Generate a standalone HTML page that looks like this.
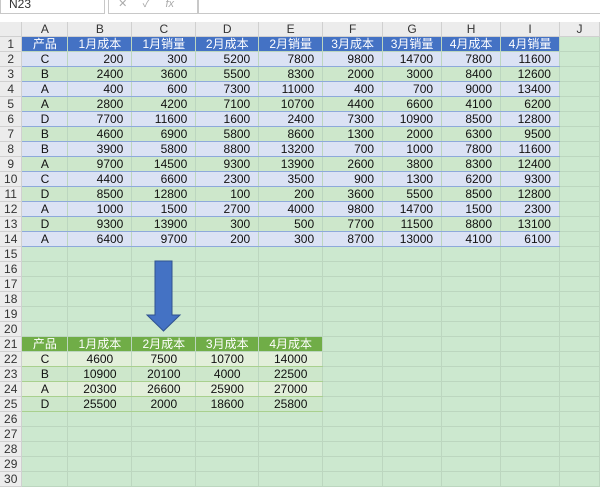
<!DOCTYPE html><html><head><meta charset="utf-8"><style>
body{margin:0;width:600px;height:475px;overflow:hidden;background:#cce8cf;font-family:"Liberation Sans","Noto Sans CJK SC",sans-serif;position:relative}
.top{position:absolute;left:0;top:0;width:600px;height:22px;background:#fff;border-bottom:1px solid #d4d4d4}
.nb{position:absolute;left:0;top:-6px;width:95px;height:18px;border:1px solid #c8c8c8;font-size:12px;color:#333;padding-left:8px;line-height:18px}
.fx{position:absolute;left:108px;top:-6px;width:88px;height:18px;border:1px solid #c8c8c8;color:#aaa;font-size:11px}
.fb{position:absolute;left:198px;top:-6px;width:402px;height:18px;border:1px solid #c8c8c8}
table{position:absolute;left:0;top:22px;border-collapse:collapse;table-layout:fixed}
td{height:14px;padding:0;border-right:1px solid #bcd6bf;border-bottom:1px solid #bcd6bf;font-size:12px;text-align:right;padding-right:8px;line-height:14px;white-space:nowrap;overflow:hidden;color:#111}
td.h,tr.ch td{background:#ececec;color:#333;text-align:center;padding:0;border-color:#d0d0d0}
tr.ch td{height:13px;text-align:center}
td.c{text-align:center;padding:0}
tr.b1 td.t{background:#4472c4;color:#fff;text-align:center;padding:0}
tr.l td.t{background:#dbe2f4;border-bottom:1px solid #8ea9db}
tr.g td.t{background:#cde7cb;border-bottom:1px solid #8ea9db}
tr.gh td.s{background:#70ad47;color:#fff;text-align:center;padding:0}
tr.gl td.s{background:#e2efda;text-align:center;padding:0;border-bottom:1px solid #a9d08e}
tr.gd td.s{background:#cde7cb;text-align:center;padding:0;border-bottom:1px solid #a9d08e}
</style></head><body>
<div class="top"><div class="nb">N23</div><div class="fx">&nbsp;&nbsp;&nbsp;✕&nbsp;&nbsp;&nbsp;&nbsp;&nbsp;✓&nbsp;&nbsp;&nbsp;&nbsp;&nbsp;<i>fx</i></div><div class="fb"></div></div>
<table>
<colgroup><col style="width:22px"><col style="width:46px"><col style="width:64px"><col style="width:64px"><col style="width:63px"><col style="width:64px"><col style="width:60px"><col style="width:59px"><col style="width:59px"><col style="width:59px"><col style="width:40px"></colgroup>
<tr class="ch"><td></td><td>A</td><td>B</td><td>C</td><td>D</td><td>E</td><td>F</td><td>G</td><td>H</td><td>I</td><td>J</td></tr>
<tr class="b1"><td class="h">1</td><td class="t">产品</td><td class="t">1月成本</td><td class="t">1月销量</td><td class="t">2月成本</td><td class="t">2月销量</td><td class="t">3月成本</td><td class="t">3月销量</td><td class="t">4月成本</td><td class="t">4月销量</td><td></td></tr>
<tr class="l"><td class="h">2</td><td class="t c">C</td><td class="t">200</td><td class="t">300</td><td class="t">5200</td><td class="t">7800</td><td class="t">9800</td><td class="t">14700</td><td class="t">7800</td><td class="t">11600</td><td></td></tr>
<tr class="g"><td class="h">3</td><td class="t c">B</td><td class="t">2400</td><td class="t">3600</td><td class="t">5500</td><td class="t">8300</td><td class="t">2000</td><td class="t">3000</td><td class="t">8400</td><td class="t">12600</td><td></td></tr>
<tr class="l"><td class="h">4</td><td class="t c">A</td><td class="t">400</td><td class="t">600</td><td class="t">7300</td><td class="t">11000</td><td class="t">400</td><td class="t">700</td><td class="t">9000</td><td class="t">13400</td><td></td></tr>
<tr class="g"><td class="h">5</td><td class="t c">A</td><td class="t">2800</td><td class="t">4200</td><td class="t">7100</td><td class="t">10700</td><td class="t">4400</td><td class="t">6600</td><td class="t">4100</td><td class="t">6200</td><td></td></tr>
<tr class="l"><td class="h">6</td><td class="t c">D</td><td class="t">7700</td><td class="t">11600</td><td class="t">1600</td><td class="t">2400</td><td class="t">7300</td><td class="t">10900</td><td class="t">8500</td><td class="t">12800</td><td></td></tr>
<tr class="g"><td class="h">7</td><td class="t c">B</td><td class="t">4600</td><td class="t">6900</td><td class="t">5800</td><td class="t">8600</td><td class="t">1300</td><td class="t">2000</td><td class="t">6300</td><td class="t">9500</td><td></td></tr>
<tr class="l"><td class="h">8</td><td class="t c">B</td><td class="t">3900</td><td class="t">5800</td><td class="t">8800</td><td class="t">13200</td><td class="t">700</td><td class="t">1000</td><td class="t">7800</td><td class="t">11600</td><td></td></tr>
<tr class="g"><td class="h">9</td><td class="t c">A</td><td class="t">9700</td><td class="t">14500</td><td class="t">9300</td><td class="t">13900</td><td class="t">2600</td><td class="t">3800</td><td class="t">8300</td><td class="t">12400</td><td></td></tr>
<tr class="l"><td class="h">10</td><td class="t c">C</td><td class="t">4400</td><td class="t">6600</td><td class="t">2300</td><td class="t">3500</td><td class="t">900</td><td class="t">1300</td><td class="t">6200</td><td class="t">9300</td><td></td></tr>
<tr class="g"><td class="h">11</td><td class="t c">D</td><td class="t">8500</td><td class="t">12800</td><td class="t">100</td><td class="t">200</td><td class="t">3600</td><td class="t">5500</td><td class="t">8500</td><td class="t">12800</td><td></td></tr>
<tr class="l"><td class="h">12</td><td class="t c">A</td><td class="t">1000</td><td class="t">1500</td><td class="t">2700</td><td class="t">4000</td><td class="t">9800</td><td class="t">14700</td><td class="t">1500</td><td class="t">2300</td><td></td></tr>
<tr class="g"><td class="h">13</td><td class="t c">D</td><td class="t">9300</td><td class="t">13900</td><td class="t">300</td><td class="t">500</td><td class="t">7700</td><td class="t">11500</td><td class="t">8800</td><td class="t">13100</td><td></td></tr>
<tr class="l"><td class="h">14</td><td class="t c">A</td><td class="t">6400</td><td class="t">9700</td><td class="t">200</td><td class="t">300</td><td class="t">8700</td><td class="t">13000</td><td class="t">4100</td><td class="t">6100</td><td></td></tr>
<tr><td class="h">15</td><td></td><td></td><td></td><td></td><td></td><td></td><td></td><td></td><td></td><td></td></tr>
<tr><td class="h">16</td><td></td><td></td><td></td><td></td><td></td><td></td><td></td><td></td><td></td><td></td></tr>
<tr><td class="h">17</td><td></td><td></td><td></td><td></td><td></td><td></td><td></td><td></td><td></td><td></td></tr>
<tr><td class="h">18</td><td></td><td></td><td></td><td></td><td></td><td></td><td></td><td></td><td></td><td></td></tr>
<tr><td class="h">19</td><td></td><td></td><td></td><td></td><td></td><td></td><td></td><td></td><td></td><td></td></tr>
<tr><td class="h">20</td><td></td><td></td><td></td><td></td><td></td><td></td><td></td><td></td><td></td><td></td></tr>
<tr class="gh"><td class="h">21</td><td class="s">产品</td><td class="s">1月成本</td><td class="s">2月成本</td><td class="s">3月成本</td><td class="s">4月成本</td><td></td><td></td><td></td><td></td><td></td></tr>
<tr class="gl"><td class="h">22</td><td class="s">C</td><td class="s">4600</td><td class="s">7500</td><td class="s">10700</td><td class="s">14000</td><td></td><td></td><td></td><td></td><td></td></tr>
<tr class="gd"><td class="h">23</td><td class="s">B</td><td class="s">10900</td><td class="s">20100</td><td class="s">4000</td><td class="s">22500</td><td></td><td></td><td></td><td></td><td></td></tr>
<tr class="gl"><td class="h">24</td><td class="s">A</td><td class="s">20300</td><td class="s">26600</td><td class="s">25900</td><td class="s">27000</td><td></td><td></td><td></td><td></td><td></td></tr>
<tr class="gd"><td class="h">25</td><td class="s">D</td><td class="s">25500</td><td class="s">2000</td><td class="s">18600</td><td class="s">25800</td><td></td><td></td><td></td><td></td><td></td></tr>
<tr><td class="h">26</td><td></td><td></td><td></td><td></td><td></td><td></td><td></td><td></td><td></td><td></td></tr>
<tr><td class="h">27</td><td></td><td></td><td></td><td></td><td></td><td></td><td></td><td></td><td></td><td></td></tr>
<tr><td class="h">28</td><td></td><td></td><td></td><td></td><td></td><td></td><td></td><td></td><td></td><td></td></tr>
<tr><td class="h">29</td><td></td><td></td><td></td><td></td><td></td><td></td><td></td><td></td><td></td><td></td></tr>
<tr><td class="h">30</td><td></td><td></td><td></td><td></td><td></td><td></td><td></td><td></td><td></td><td></td></tr>
</table>
<svg style="position:absolute;left:0;top:0" width="600" height="475"><polygon points="155,261 172,261 172,315 180,315 163.5,331 147,315 155,315" fill="#4472c4" stroke="#2f528f" stroke-width="1"/></svg>
</body></html>
